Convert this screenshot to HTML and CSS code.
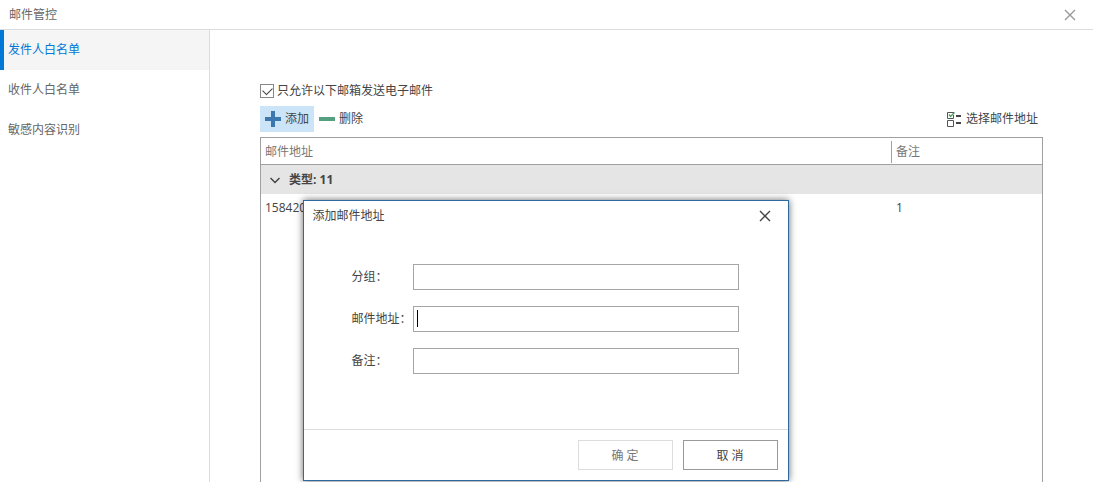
FILE: index.html
```html
<!DOCTYPE html>
<html lang="zh-CN">
<head>
    <meta charset="UTF-8">
    <meta name="viewport" content="width=device-width, initial-scale=1.0">
    <title>邮件管控</title>
    <link rel="stylesheet" href="styles.css">
</head>
<body>
    <header class="titlebar">
        <span>邮件管控</span>
        <button class="close" type="button" aria-label="关闭">
            <svg width="12" height="12" viewBox="0 0 12 12"><path d="M1 1L11 11M11 1L1 11"/></svg>
        </button>
    </header>
    <div class="layout">
        <nav class="sidebar">
            <a class="active" href="#sender">发件人白名单</a>
            <a href="#receiver">收件人白名单</a>
            <a href="#sensitive">敏感内容识别</a>
        </nav>
        <main class="content">
            <label class="check"><input type="checkbox" checked>只允许以下邮箱发送电子邮件</label>
            <div class="toolbar">
                <button class="tool selected" type="button">
                    <svg width="16" height="16" viewBox="0 0 16 16"><path d="M6 0h4v6h6v4h-6v6H6v-6H0V6h6z" fill="#3b78ae"/></svg>添加
                </button>
                <button class="tool" type="button">
                    <svg width="16" height="16" viewBox="0 0 16 16"><path d="M0 6h16v4H0z" fill="#55a080"/></svg>删除
                </button>
                <button class="tool select" type="button">
                    <svg width="15" height="15" viewBox="0 0 15 15">
                        <path d="M7 0.5H0.5V6.5H6.5V3M0.5 8.5H6.5V14.5H0.5z" fill="none" stroke="#555"/>
                        <path d="M2 2.5L3.5 4.5L7.5 0.5" fill="none" stroke="#4a9a5c" stroke-width="1.3"/>
                        <path d="M9 3h5v2H9zM9 10h5v2H9z" fill="#444"/>
                    </svg>选择邮件地址
                </button>
            </div>
            <div class="grid">
                <table>
                    <thead>
                        <tr>
                            <th>邮件地址</th>
                            <th class="remark"><span>备注</span></th>
                        </tr>
                    </thead>
                    <tbody>
                        <tr class="group">
                            <th colspan="2">
                                <svg width="10" height="7" viewBox="0 0 10 7"><path d="M0.5 1L5 5.5L9.5 1"/></svg>类型: 11
                            </th>
                        </tr>
                        <tr>
                            <td>158420</td>
                            <td class="remark">1</td>
                        </tr>
                    </tbody>
                </table>
            </div>
        </main>
    </div>

    <form class="dialog" role="dialog" aria-labelledby="dialogTitle">
        <div class="dialog-head">
            <span id="dialogTitle">添加邮件地址</span>
            <button class="close" type="button" aria-label="关闭">
                <svg width="12" height="12" viewBox="0 0 12 12"><path d="M1 1L11 11M11 1L1 11"/></svg>
            </button>
        </div>
        <div class="dialog-body">
            <div class="field">
                <label for="group">分组：</label>
                <div class="box"><input type="text" id="group"></div>
            </div>
            <div class="field">
                <label for="address">邮件地址：</label>
                <div class="box"><input type="text" id="address"><i class="caret"></i></div>
            </div>
            <div class="field">
                <label for="remark">备注：</label>
                <div class="box"><input type="text" id="remark"></div>
            </div>
        </div>
        <div class="dialog-foot">
            <button type="button" disabled>确 定</button>
            <button type="button">取 消</button>
        </div>
    </form>
</body>
</html>
```

FILE: styles.css
```css
* {
    box-sizing: border-box;
}
body {
    margin: 0;
    height: 100vh;
    display: flex;
    flex-direction: column;
    overflow: hidden;
    background: #fff;
    color: #444;
    font: 12px/16px "Open Sans", "Noto Sans CJK SC", sans-serif;
}
button, input {
    font: inherit;
    color: inherit;
}
svg {
    display: block;
    flex: none;
}

/* window title */
.titlebar {
    display: flex;
    align-items: center;
    justify-content: space-between;
    height: 30px;
    padding: 0 17px 0 9px;
    border-bottom: 1px solid #dcdcdc;
    color: #666;
}
.close {
    padding: 0;
    border: none;
    background: none;
}
.close path {
    fill: none;
    stroke: #444;
    stroke-width: 1.4;
}
.titlebar .close path {
    stroke: #999;
}

.layout {
    flex: 1;
    display: flex;
}
.sidebar {
    width: 210px;
    border-right: 1px solid #dcdcdc;
}
.sidebar a {
    display: flex;
    align-items: center;
    height: 40px;
    padding-left: 4px;
    border-left: 4px solid transparent;
    color: #666;
    text-decoration: none;
}
.sidebar .active {
    border-color: #0078d7;
    background: #f5f5f5;
    color: #0078d7;
}

.content {
    flex: 1;
    display: flex;
    flex-direction: column;
    padding: 53px 50px 0;
}
.check {
    display: flex;
    align-items: center;
    gap: 3px;
}
.check input {
    appearance: none;
    width: 14px;
    height: 14px;
    margin: 0;
    border: 1px solid #888;
    display: grid;
    place-items: center;
}
.check input:checked::before {
    content: "";
    width: 8px;
    height: 5px;
    margin-bottom: 3px;
    border: solid #444;
    border-width: 0 0 1px 1px;
    transform: rotate(-45deg);
}

.toolbar {
    display: flex;
    margin: 7px 0 5px;
}
.tool {
    display: flex;
    align-items: center;
    gap: 4px;
    height: 26px;
    padding: 0 5px;
    border: none;
    background: none;
}
.tool.selected {
    background: #cce4f7;
}
.tool.select {
    margin-left: auto;
}

/* address list */
.grid {
    flex: 1;
    border: 1px solid #a0a0a0;
    border-bottom: none;
}
table {
    width: 100%;
    border-collapse: separate;
    border-spacing: 0;
}
th, td {
    height: 27px;
    padding: 0 4px;
    text-align: left;
    font-weight: normal;
}
thead th {
    padding-top: 2px;
    border-bottom: 1px solid #a0a0a0;
    color: #777;
}
.remark {
    width: 151px;
}
thead .remark {
    padding: 2px 0 0;
}
.remark span {
    display: block;
    padding: 3px 4px;
    border-left: 1px solid #a0a0a0;
}
td.remark {
    padding-left: 5px;
}
.group th {
    height: 29px;
    padding-left: 9px;
    background: #e5e5e5;
    font-weight: bold;
}
.group svg {
    display: inline-block;
    margin-right: 9px;
    vertical-align: middle;
}
.group path {
    fill: none;
    stroke: #444;
    stroke-width: 1.5;
}

.dialog {
    position: absolute;
    top: 200px;
    left: calc(50% - 244px);
    width: 486px;
    background: #fff;
    border: 1px solid #2f6a9f;
    box-shadow: 0 0 7px rgba(0, 0, 0, 0.6);
}
.dialog-head {
    display: flex;
    align-items: center;
    justify-content: space-between;
    height: 30px;
    padding: 0 17px 0 9px;
}
.dialog-body {
    padding: 33px 49px 55px 48px;
    display: grid;
    gap: 16px;
}
.field {
    display: flex;
    align-items: center;
}
.field label {
    width: 61px;
    white-space: nowrap;
}
.box {
    position: relative;
    flex: 1;
}
.box input {
    display: block;
    width: 100%;
    height: 26px;
    padding: 0 4px;
    border: 1px solid #a5a5a5;
    outline: none;
}
.caret {
    position: absolute;
    left: 4px;
    top: 4px;
    width: 1px;
    height: 17px;
    background: #000;
}
.dialog-foot {
    display: flex;
    justify-content: flex-end;
    gap: 10px;
    padding: 10px;
    border-top: 1px solid #dcdcdc;
}
.dialog-foot button {
    width: 95px;
    height: 30px;
    padding: 2px 0 0;
    border: 1px solid #999;
    background: #fff;
}
.dialog-foot button:disabled {
    border-color: #dcdcdc;
    color: #777;
}
```
